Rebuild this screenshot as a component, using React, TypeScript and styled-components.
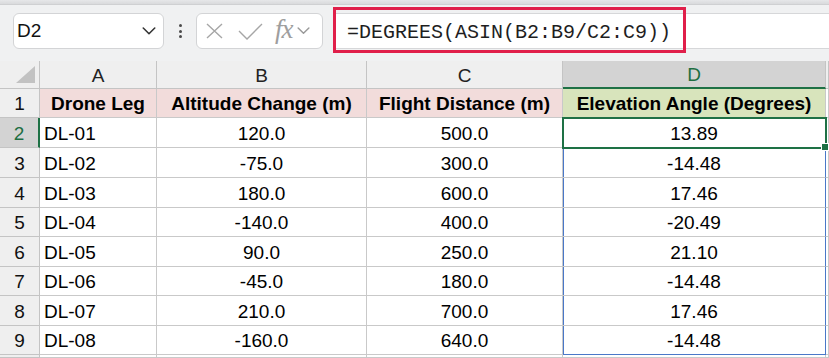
import styled, { createGlobalStyle } from "styled-components";

const GlobalStyle = createGlobalStyle`
  html, body {
    margin: 0;
    padding: 0;
    background: #ffffff;
    overflow: hidden;
  }
  body {
    font-family: "Liberation Sans", Arial, sans-serif;
    color: #000;
  }
`;

const Page = styled.div`
  width: 829px;
  height: 358px;
  overflow: hidden;
  display: flex;
  flex-direction: column;
`;

const TopBand = styled.div`
  height: 4px;
  background: linear-gradient(#e6e7e9, #d9dadc);
  border-bottom: 1px solid #cfd0d2;
`;

const Toolbar = styled.div`
  height: 56px;
  box-sizing: border-box;
  background: #f0f1f2;
  display: flex;
  align-items: flex-start;
  padding: 8px 0 0 13px;
`;

const Box = styled.div<{ $width: number }>`
  width: ${(p) => p.$width}px;
  height: 36px;
  box-sizing: border-box;
  background: #ffffff;
  border: 1px solid #d3d4d6;
  border-radius: 6px;
  display: flex;
  align-items: center;
`;

const NameText = styled.span`
  font-size: 19px;
  padding-left: 3px;
  flex: 1;
  color: #111;
`;

const Dots = styled.div`
  width: 4px;
  height: 36px;
  margin: 0 14px;
  display: flex;
  flex-direction: column;
  justify-content: center;
  align-items: center;
  gap: 2.5px;
  span {
    width: 3px;
    height: 3px;
    border-radius: 50%;
    background: #4a4a4a;
  }
`;

const FxText = styled.span`
  font-family: "Liberation Serif", "Times New Roman", serif;
  font-style: italic;
  font-size: 27px;
  line-height: 1;
  color: #9e9e9e;
  margin-left: 12px;
  letter-spacing: -1px;
  padding-bottom: 3px;
`;

const FormulaBar = styled.div`
  flex: 1;
  margin-left: 10px;
  height: 36px;
  box-sizing: border-box;
  background: #ffffff;
  border-top: 1px solid #d6d7d9;
  border-bottom: 1px solid #d6d7d9;
  position: relative;
  display: flex;
  align-items: center;
  padding-left: 14px;
`;

const FormulaText = styled.span`
  font-family: "Liberation Mono", "Courier New", monospace;
  font-size: 20px;
  color: #1e1e1e;
  padding-top: 2px;
`;

const Highlight = styled.div`
  position: absolute;
  left: 0;
  top: -7px;
  width: 353px;
  height: 46px;
  box-sizing: border-box;
  border: 3px solid #e01f4a;
  pointer-events: none;
`;

const Sheet = styled.div`
  display: grid;
  grid-template-columns: 40px 117px 210px 196px 263px 1fr;
  grid-template-rows: 28px 29px 30px 30px 30px 29px 30px 29px 30px 29px 1fr;
  flex: 1;
  font-size: 19px;
`;

const Corner = styled.div`
  background: #efefef;
  border-right: 1px solid #c4c4c4;
  border-bottom: 1px solid #c4c4c4;
  display: flex;
  align-items: flex-end;
  justify-content: flex-end;
  padding: 0 4px 5px 0;
`;

const ColHead = styled.div<{ $active?: boolean }>`
  background: ${(p) => (p.$active ? "#d3d3d3" : "#efefef")};
  color: ${(p) => (p.$active ? "#1e6e42" : "#222")};
  border-right: 1px solid #c4c4c4;
  border-bottom: ${(p) => (p.$active ? "2px solid #1e7145" : "1px solid #c4c4c4")};
  display: flex;
  align-items: center;
  justify-content: center;
  padding-top: 2px;
`;

const RowHead = styled.div<{ $active?: boolean }>`
  background: ${(p) => (p.$active ? "#d3d3d3" : "#efefef")};
  color: ${(p) => (p.$active ? "#1e6e42" : "#111")};
  border-bottom: 1px solid #c4c4c4;
  border-right: ${(p) => (p.$active ? "2px solid #1e7145" : "1px solid #c4c4c4")};
  display: flex;
  align-items: center;
  justify-content: center;
  padding-top: 2px;
`;

const Cell = styled.div<{
  $align?: "left" | "center";
  $fill?: string;
  $bold?: boolean;
  $range?: boolean;
  $rangeEnd?: boolean;
}>`
  background: ${(p) => p.$fill ?? "#ffffff"};
  font-weight: ${(p) => (p.$bold ? 700 : 400)};
  border-right: 1px solid ${(p) => (p.$range ? "#4a78c8" : "#c9c9c9")};
  border-bottom: 1px solid ${(p) => (p.$rangeEnd ? "#4a78c8" : "#c9c9c9")};
  box-shadow: ${(p) => (p.$range ? "inset 1px 0 0 #4a78c8" : "none")};
  display: flex;
  align-items: center;
  justify-content: ${(p) => (p.$align === "left" ? "flex-start" : "center")};
  padding: 2px 0 0 ${(p) => (p.$align === "left" ? "4px" : "0")};
  white-space: nowrap;
  overflow: visible;
  position: relative;
`;

const ActiveCell = styled(Cell)`
  outline: 2px solid #1e7145;
  outline-offset: -1px;
  z-index: 2;
  &::after {
    content: "";
    position: absolute;
    right: -4px;
    bottom: -4px;
    width: 6px;
    height: 6px;
    background: #1e7145;
    border: 1px solid #ffffff;
  }
`;

const rows: [string, string, string, string][] = [
  ["DL-01", "120.0", "500.0", "13.89"],
  ["DL-02", "-75.0", "300.0", "-14.48"],
  ["DL-03", "180.0", "600.0", "17.46"],
  ["DL-04", "-140.0", "400.0", "-20.49"],
  ["DL-05", "90.0", "250.0", "21.10"],
  ["DL-06", "-45.0", "180.0", "-14.48"],
  ["DL-07", "210.0", "700.0", "17.46"],
  ["DL-08", "-160.0", "640.0", "-14.48"],
];

const PINK = "#f2dcdb";
const GREEN = "#d8e4bc";

function Chevron({ color, size }: { color: string; size: number }) {
  return (
    <svg width={size} height={size * 0.55} viewBox="0 0 14 8" fill="none">
      <path d="M1 1l6 6 6-6" stroke={color} strokeWidth="1.6" strokeLinecap="round" strokeLinejoin="round" />
    </svg>
  );
}

export default function App() {
  return (
    <Page>
      <GlobalStyle />
      <TopBand />
      <Toolbar>
        <Box $width={151}>
          <NameText>D2</NameText>
          <span style={{ marginRight: 7, display: "flex" }}>
            <Chevron color="#333" size={14} />
          </span>
        </Box>
        <Dots>
          <span />
          <span />
          <span />
        </Dots>
        <Box $width={127}>
          <svg width="17" height="16" viewBox="0 0 17 16" style={{ marginLeft: 9 }}>
            <path d="M1 1l15 14M16 1L1 15" stroke="#a6a6a6" strokeWidth="1.4" />
          </svg>
          <svg width="25" height="17" viewBox="0 0 25 17" style={{ marginLeft: 15 }}>
            <path d="M1 8l8 8L24 1" stroke="#a6a6a6" strokeWidth="1.4" fill="none" />
          </svg>
          <FxText>fx</FxText>
          <span style={{ marginLeft: 4, display: "flex" }}>
            <Chevron color="#9a9a9a" size={13} />
          </span>
        </Box>
        <FormulaBar>
          <FormulaText>=DEGREES(ASIN(B2:B9/C2:C9))</FormulaText>
          <Highlight />
        </FormulaBar>
      </Toolbar>
      <Sheet>
        <Corner>
          <svg width="19" height="17" viewBox="0 0 19 17">
            <path d="M19 0V17H0Z" fill="#c2c2c2" />
          </svg>
        </Corner>
        <ColHead>A</ColHead>
        <ColHead>B</ColHead>
        <ColHead>C</ColHead>
        <ColHead $active>D</ColHead>
        <ColHead />

        <RowHead>1</RowHead>
        <Cell $fill={PINK} $bold>Drone Leg</Cell>
        <Cell $fill={PINK} $bold>Altitude Change (m)</Cell>
        <Cell $fill={PINK} $bold>Flight Distance (m)</Cell>
        <Cell $fill={GREEN} $bold>Elevation Angle (Degrees)</Cell>
        <Cell />

        {rows.map((r, i) => {
          const n = i + 2;
          const last = i === rows.length - 1;
          return [
            <RowHead key={`h${n}`} $active={n === 2}>
              {n}
            </RowHead>,
            <Cell key={`a${n}`} $align="left">
              {r[0]}
            </Cell>,
            <Cell key={`b${n}`}>{r[1]}</Cell>,
            <Cell key={`c${n}`}>{r[2]}</Cell>,
            n === 2 ? (
              <ActiveCell key={`d${n}`} $range>
                {r[3]}
              </ActiveCell>
            ) : (
              <Cell key={`d${n}`} $range $rangeEnd={last}>
                {r[3]}
              </Cell>
            ),
            <Cell key={`e${n}`} />,
          ];
        })}

        <RowHead />
        <Cell />
        <Cell />
        <Cell />
        <Cell />
        <Cell />
      </Sheet>
    </Page>
  );
}
